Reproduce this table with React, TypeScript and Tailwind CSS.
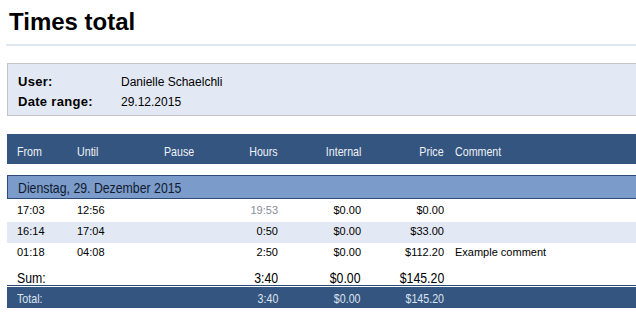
import React from 'react';

type Entry = {
  from: string;
  until: string;
  hours: string;
  internal: string;
  price: string;
  comment?: string;
  muted?: boolean;
};

const entries: Entry[] = [
  { from: '17:03', until: '12:56', hours: '19:53', internal: '$0.00', price: '$0.00', muted: true },
  { from: '16:14', until: '17:04', hours: '0:50', internal: '$0.00', price: '$33.00' },
  { from: '01:18', until: '04:08', hours: '2:50', internal: '$0.00', price: '$112.20', comment: 'Example comment' },
];

// fixed columns: From | Until | Pause | Hours | Internal | Price | Comment
const cols = 'grid grid-cols-[60px_60px_77px_74px_83px_83px_1fr]';

// no narrow face installed, so squeeze Arial-metric text horizontally
function N({ children, right }: { children: React.ReactNode; right?: boolean }) {
  return (
    <span className={`inline-block whitespace-nowrap scale-x-[0.82] ${right ? 'origin-right' : 'origin-left'}`}>
      {children}
    </span>
  );
}

function App() {
  return (
    <div className="w-[636px] h-[333px] overflow-hidden bg-white font-['Liberation_Sans',Arial,sans-serif] text-black">
      <h1 className="mt-[8px] pl-[9px] text-[24px] leading-[28px] font-bold">Times total</h1>
      <div className="mt-[8px] ml-[6px] h-[2px] bg-[#dfe8f0]" />

      <div className="mt-[17px] ml-[7px] border border-r-0 border-[#c4c4c4] bg-[#e3e9f4] pt-[8px] pb-[3px] pl-[10px]">
        <div className="flex h-[20px] items-center text-[12px]">
          <span className="w-[103px] text-[13px] font-bold tracking-[0.3px]">User:</span>
          <span>Danielle Schaelchli</span>
        </div>
        <div className="flex h-[20px] items-center text-[12px]">
          <span className="w-[103px] text-[13px] font-bold tracking-[0.3px]">Date range:</span>
          <span>29.12.2015</span>
        </div>
      </div>

      <div className="ml-[7px] mt-[18px]">
        <div className={`${cols} h-[30px] bg-[#34557f] pt-[10px] text-[13px] leading-[16px] text-[#eef2f8]`}>
          <span className="pl-[10px]"><N>From</N></span>
          <span className="pl-[10px]"><N>Until</N></span>
          <span className="pl-[37px]"><N>Pause</N></span>
          <span className="text-right"><N right>Hours</N></span>
          <span className="text-right"><N right>Internal</N></span>
          <span className="text-right"><N right>Price</N></span>
          <span className="pl-[11px]"><N>Comment</N></span>
        </div>

        <div className="mt-[11px] h-[24px] border border-r-0 border-[#2d4b78] bg-[#7b9bca] pl-[10px] text-[15px] leading-[23px] text-[#111a2e]">
          <N>Dienstag, 29. Dezember 2015</N>
        </div>

        <div className="mt-[2px] text-[11px]">
          {entries.map((e, i) => (
            <div
              key={i}
              className={`${cols} h-[21px] leading-[19px] ${i % 2 === 1 ? 'bg-[#e3e9f4]' : 'bg-white'}`}
            >
              <span className="pl-[10px]">{e.from}</span>
              <span className="pl-[10px]">{e.until}</span>
              <span />
              <span className={`text-right ${e.muted ? 'text-[#8c8a9c]' : ''}`}>{e.hours}</span>
              <span className="text-right">{e.internal}</span>
              <span className="text-right">{e.price}</span>
              <span className="pl-[11px]">{e.comment}</span>
            </div>
          ))}
        </div>

        <div className={`${cols} h-[21px] pt-[5px] text-[15px] leading-[17px]`}>
          <span className="pl-[10px]"><N>Sum:</N></span>
          <span />
          <span />
          <span className="text-right"><N right>3:40</N></span>
          <span className="text-right"><N right>$0.00</N></span>
          <span className="text-right"><N right>$145.20</N></span>
          <span />
        </div>
        <div className="h-[1px] bg-[#2d4b78]" />
        <div className={`${cols} mt-[1px] h-[21px] bg-[#34557f] pt-[2px] text-[13px] leading-[19px] text-[#dde4ef]`}>
          <span className="pl-[10px]"><N>Total:</N></span>
          <span />
          <span />
          <span className="text-right"><N right>3:40</N></span>
          <span className="text-right"><N right>$0.00</N></span>
          <span className="text-right"><N right>$145.20</N></span>
          <span />
        </div>
      </div>
    </div>
  );
}

export default App;
